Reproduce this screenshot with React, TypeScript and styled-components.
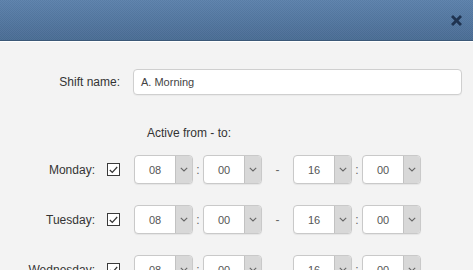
import React from "react";
import styled, { createGlobalStyle } from "styled-components";

const Global = createGlobalStyle`
  html, body { margin: 0; padding: 0; }
  body {
    background: #f3f3f3;
    font-family: "Liberation Sans", Arial, sans-serif;
    width: 473px;
    height: 270px;
    overflow: hidden;
  }
`;

const Dialog = styled.div`
  width: 473px;
  height: 270px;
  background: #f3f3f3;
  overflow: hidden;
`;

const Header = styled.div`
  height: 40px;
  display: flex;
  align-items: center;
  justify-content: flex-end;
  padding-right: 11px;
  background-color: #52769f;
  background-image:
    repeating-conic-gradient(rgba(255,255,255,0.03) 0 25%, rgba(0,0,0,0.03) 0 50%),
    linear-gradient(#5d82ac, #4a6d95);
  background-size: 2px 2px, 100% 100%;
  border-bottom: 1px solid #3b5877;
  box-shadow: 0 1px 0 #ffffff;
`;

const Close = styled.span`
  width: 11px;
  height: 11px;
  display: flex;
  cursor: pointer;
  color: #1f3350;
`;

const Body = styled.div`
  padding-top: 28px;
`;

const NameRow = styled.div`
  display: flex;
  align-items: center;
  height: 26px;
`;

const Label = styled.label<{ $w: number }>`
  width: ${(p) => p.$w}px;
  text-align: right;
  font-size: 12px;
  color: #333;
  flex: none;
`;

const TextInput = styled.div`
  margin-left: 13px;
  margin-right: 11px;
  flex: 1;
  height: 24px;
  border: 1px solid #cfcfcf;
  border-radius: 4px;
  background: #fff;
  display: flex;
  align-items: center;
  padding-left: 7px;
  font-size: 11px;
  color: #444;
  box-shadow: 0 1px 1px rgba(0,0,0,0.04);
`;

const ActiveTitle = styled.div`
  margin-top: 30px;
  padding-left: 147px;
  font-size: 12px;
  color: #333;
  height: 16px;
  line-height: 16px;
`;

const Days = styled.div`
  display: flex;
  flex-direction: column;
  gap: 21px;
  margin-top: 14px;
`;

const DayRow = styled.div`
  display: flex;
  align-items: center;
  height: 29px;
`;

const Check = styled.span`
  margin-left: 12px;
  width: 11px;
  height: 11px;
  border: 1px solid #3a3a3a;
  background: #fff;
  display: flex;
  align-items: center;
  justify-content: center;
  flex: none;
`;

const Select = styled.div<{ $ml: number }>`
  margin-left: ${(p) => p.$ml}px;
  width: 57px;
  height: 27px;
  border: 1px solid #c9c9c9;
  border-radius: 4px;
  background: #fff;
  display: flex;
  overflow: hidden;
  flex: none;
  box-shadow: 0 1px 1px rgba(0,0,0,0.06);
`;

const SelectValue = styled.span`
  flex: 1;
  display: flex;
  align-items: center;
  justify-content: center;
  font-size: 11px;
  color: #555;
`;

const SelectArrow = styled.span`
  width: 16px;
  background: #d8d8d8;
  border-left: 1px solid #c2c2c2;
  display: flex;
  align-items: center;
  justify-content: center;
`;

const Sep = styled.span<{ $w: number }>`
  width: ${(p) => p.$w}px;
  text-align: center;
  font-size: 12px;
  color: #666;
  flex: none;
`;

const Chevron = () => (
  <svg width="8" height="5" viewBox="0 0 8 5">
    <path d="M0.8 0.8 L4 4 L7.2 0.8" fill="none" stroke="#666" strokeWidth="1.1" />
  </svg>
);

const TimeSelect = ({ value, ml }: { value: string; ml: number }) => (
  <Select $ml={ml}>
    <SelectValue>{value}</SelectValue>
    <SelectArrow>
      <Chevron />
    </SelectArrow>
  </Select>
);

const days = ["Monday", "Tuesday", "Wednesday"];

export default function App() {
  return (
    <Dialog>
      <Global />
      <Header>
        <Close aria-label="close">
          <svg width="11" height="11" viewBox="0 0 11 11">
            <path
              d="M0 2 L2 0 L5.5 3.5 L9 0 L11 2 L7.5 5.5 L11 9 L9 11 L5.5 7.5 L2 11 L0 9 L3.5 5.5 Z"
              fill="currentColor"
            />
          </svg>
        </Close>
      </Header>
      <Body>
        <NameRow>
          <Label $w={120}>Shift name:</Label>
          <TextInput>A. Morning</TextInput>
        </NameRow>
        <ActiveTitle>Active from - to:</ActiveTitle>
        <Days>
          {days.map((d) => (
            <DayRow key={d}>
              <Label $w={95}>{d}:</Label>
              <Check>
                <svg width="9" height="8" viewBox="0 0 9 8">
                  <path d="M0.8 4 L3.3 6.5 L8.2 1" fill="none" stroke="#333" strokeWidth="1.2" />
                </svg>
              </Check>
              <TimeSelect value="08" ml={14} />
              <Sep $w={10}>:</Sep>
              <TimeSelect value="00" ml={0} />
              <Sep $w={31}>-</Sep>
              <TimeSelect value="16" ml={0} />
              <Sep $w={10}>:</Sep>
              <TimeSelect value="00" ml={0} />
            </DayRow>
          ))}
        </Days>
      </Body>
    </Dialog>
  );
}
